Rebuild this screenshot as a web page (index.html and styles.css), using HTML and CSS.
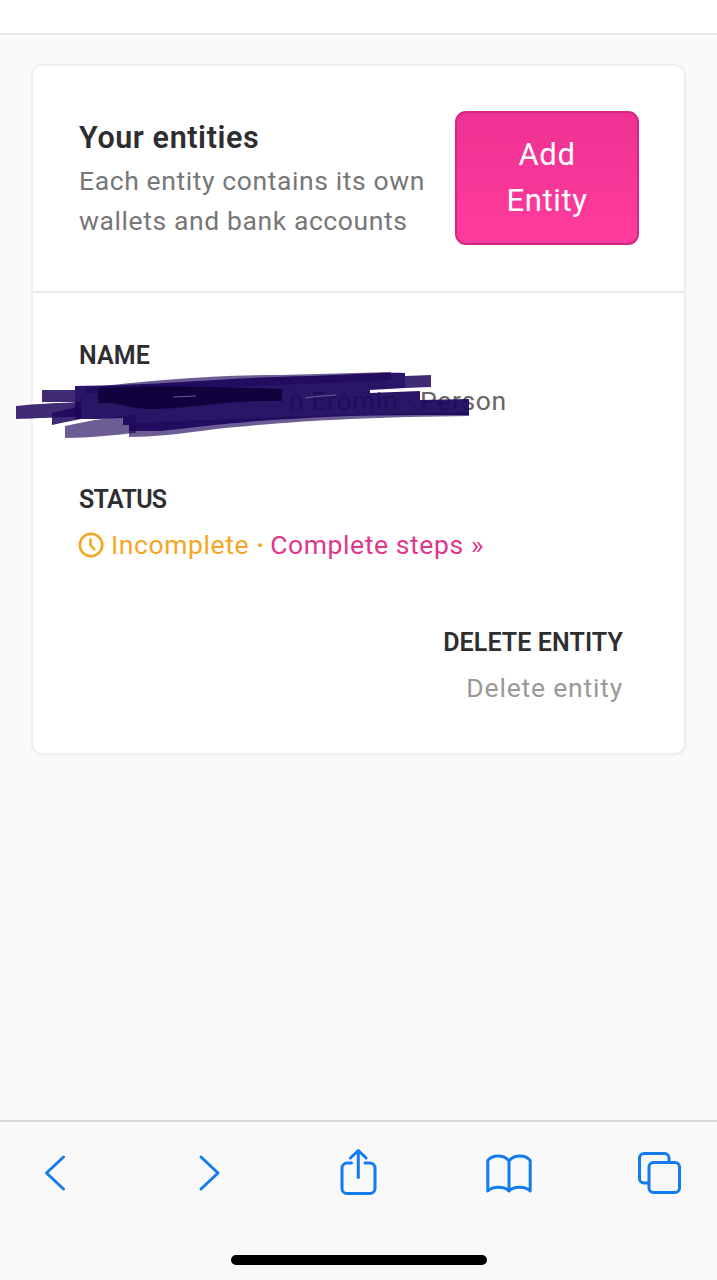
FILE: index.html
```html
<!DOCTYPE html>
<html lang="en">

<head>
    <meta charset="UTF-8">
    <meta name="viewport" content="width=device-width, initial-scale=1.0">
    <title>Your entities</title>
    <link rel="stylesheet" href="styles.css">
</head>

<body>
    <div class="topbar"></div>

    <main class="content">
        <div class="card">
            <div class="card-header">
                <div class="card-intro">
                    <h1>Your entities</h1>
                    <p>Each entity contains its own wallets and bank accounts</p>
                </div>
                <button class="add-btn" type="button">Add<br>Entity</button>
            </div>

            <div class="card-body">
                <div class="field name-field">
                    <h2>Name</h2>
                    <p class="name-value">n Eromin · Person</p>
                    <svg class="marker" width="460" height="72" viewBox="12 370 460 72">
                        <path class="ink light" d="M64 426 C90 420 110 418 135 414 V433 C110 435 90 438 64 438Z" />
                        <path class="ink light" d="M85 388 C150 380 210 375 280 375 L390 372 V380 L85 394Z" />
                        <path class="ink" d="M404 376 L430 375 V387 L404 388Z" />
                        <path class="ink" d="M41 390 H74 V402 H41Z" />
                        <path class="ink" d="M15 406 C45 403 60 403 80 402 V417 C60 417 45 418 15 419Z" />
                        <path class="ink" d="M51 413 C60 411 70 408 80 406 V419 C70 421 60 423 51 425Z" />
                        <path class="ink dark" d="M74 386 C170 385 230 377 310 376 C350 375 375 372 404 373 V388 L369 390 V393 L419 391 V400 L468 399 V415 C400 415 340 415 290 419 C230 422 200 427 160 431 H128 V425 H122 V418 C105 419 90 419 74 419Z" />
                        <path class="ink light" d="M128 423 C230 419 300 416 468 412 V416 C360 417 280 422 215 429 C180 434 150 437 128 437Z" />
                        <path class="core" d="M97 388 C160 385 220 387 281 389 V401 C220 400 190 409 150 409 C120 408 125 402 97 403Z" />
                        <path class="gap" d="M172 397 L195 396M304 398 C315 396 325 396 335 395" />
                    </svg>
                </div>

                <div class="field">
                    <h2 class="tight">Status</h2>
                    <p class="status">
                        <svg class="clock" width="26" height="26" viewBox="0 0 26 26">
                            <circle cx="13" cy="13" r="11.2" />
                            <path d="M12.500 6.500V13l4.500 5" />
                        </svg>
                        <span class="incomplete">Incomplete <b>·</b>&nbsp;</span><a class="steps" href="#">Complete steps »</a>
                    </p>
                </div>

                <div class="field field-right">
                    <h2>Delete entity</h2>
                    <p class="muted">Delete entity</p>
                </div>
            </div>
        </div>
    </main>

    <footer class="toolbar">
        <nav class="toolbar-icons">
            <svg viewBox="0 0 46 50"><path d="M31.500 10 14.500 26l17 16" /></svg>
            <svg viewBox="0 0 46 50"><path d="M18 10l17 16-17 16" /></svg>
            <svg viewBox="0 0 46 50">
                <path d="M16.500 16H12a5 5 0 0 0-5 5v20.500a5 5 0 0 0 5 5h23a5 5 0 0 0 5-5V21a5 5 0 0 0-5-5h-5" />
                <path d="M23.300 30.500V3.500M15.500 11l7.800-7.500 7.800 7.500" />
            </svg>
            <svg viewBox="0 0 46 50">
                <path d="M23 14v30M23 14C18 7 6 7.500 1.800 13.500V44C7 39 18 39 23 44c5-5 16-5 21.200 0V13.500C40 7.500 28 7 23 14Z" />
            </svg>
            <svg viewBox="0 0 46 50">
                <path d="M11.500 36H7a4.500 4.500 0 0 1-4.500-4.500V11A4.500 4.500 0 0 1 7 6.500h20.500A4.500 4.500 0 0 1 32 11v4.500" />
                <rect x="12" y="15.500" width="30.500" height="30" rx="4.500" />
            </svg>
        </nav>
        <div class="home-bar"></div>
    </footer>
</body>

</html>
```
FILE: styles.css
```css
body {
    margin: 0;
    height: 1280px;
    display: flex;
    flex-direction: column;
    background-color: #fafafa;
    color: #2e2e30;
    font-family: Roboto, "Liberation Sans", sans-serif;
    font-size: 26.5px;
    overflow: hidden;
}

h1,
h2,
p {
    margin: 0;
}

.topbar {
    height: 33px;
    background-color: white;
    border-bottom: 2px solid #ebebeb;
}

.content {
    flex: 1;
    padding: 29px 31px 0;
}

.card {
    background-color: white;
    border: 2px solid #efefef;
    border-radius: 11px;
    box-shadow: 0 1px 3px rgba(0, 0, 0, 0.03);
}

.card-header {
    display: flex;
    align-items: center;
    justify-content: space-between;
    padding: 45px 45px 46px 46px;
    border-bottom: 2px solid #ebebeb;
}

.card-intro {
    width: 360px;
}

.card-intro h1 {
    font-size: 30.5px;
    font-weight: 600;
    line-height: 42px;
    letter-spacing: 0.6px;
    padding: 1px 0 2px;
}

.card-intro p {
    line-height: 40px;
    letter-spacing: 0.6px;
    color: #777;
}

.add-btn {
    flex: none;
    box-sizing: border-box;
    width: 184px;
    height: 134px;
    padding: 0;
    border: 2px solid #d42683;
    border-radius: 11px;
    background: linear-gradient(#ee3192, #ff3c9e);
    color: white;
    font-family: inherit;
    font-size: 31px;
    line-height: 46px;
    letter-spacing: 0.6px;
}

/* Entity fields */
.card-body {
    display: flex;
    flex-direction: column;
    gap: 52.5px;
    padding: 40px 61px 42px 46px;
}

.field {
    line-height: 46px;
    letter-spacing: 0.6px;
}

.field h2 {
    font-size: 25px;
    font-weight: 600;
    letter-spacing: 0.1px;
    text-transform: uppercase;
}

.field h2.tight {
    letter-spacing: -0.7px;
}

.field p {
    margin-top: -1px;
}

.field-right {
    text-align: right;
}

.name-field {
    position: relative;
}

.name-value {
    padding-left: 210px;
    color: #666;
}

/* Marker strokes over the name */
.marker {
    position: absolute;
    left: -66px;
    top: 37px;
}

.ink {
    fill: #1d075c;
    fill-opacity: 0.85;
}

.ink.light {
    fill-opacity: 0.65;
}

.ink.dark {
    fill-opacity: 0.94;
}

.core {
    fill: #0c0036;
    fill-opacity: 0.85;
}

.gap {
    fill: none;
    stroke: #6d5c9c;
    stroke-width: 1;
}

.status {
    display: flex;
    align-items: center;
}

.clock {
    margin: 0 7px 0 -1px;
    fill: none;
    stroke: #f5a623;
    stroke-width: 2.6;
}

.incomplete {
    color: #f5a623;
}

.steps {
    margin-left: -2px;
    color: #e0368c;
    text-decoration: none;
}

.muted {
    letter-spacing: 0.8px;
    color: #999;
}

/* Browser toolbar */
.toolbar {
    box-sizing: border-box;
    height: 160px;
    display: flex;
    flex-direction: column;
    align-items: center;
    border-top: 2px solid #d8d8d8;
    background-color: #f9f9f9;
}

.toolbar-icons {
    align-self: stretch;
    display: flex;
    justify-content: space-between;
    padding: 25px 34px 0 32px;
}

.toolbar-icons svg {
    width: 46px;
    height: 50px;
    fill: none;
    stroke: #127bed;
    stroke-width: 3;
    stroke-linecap: round;
    stroke-linejoin: round;
}

.home-bar {
    width: 256px;
    height: 10px;
    margin-top: 58px;
    border-radius: 5px;
    background-color: black;
}
```
